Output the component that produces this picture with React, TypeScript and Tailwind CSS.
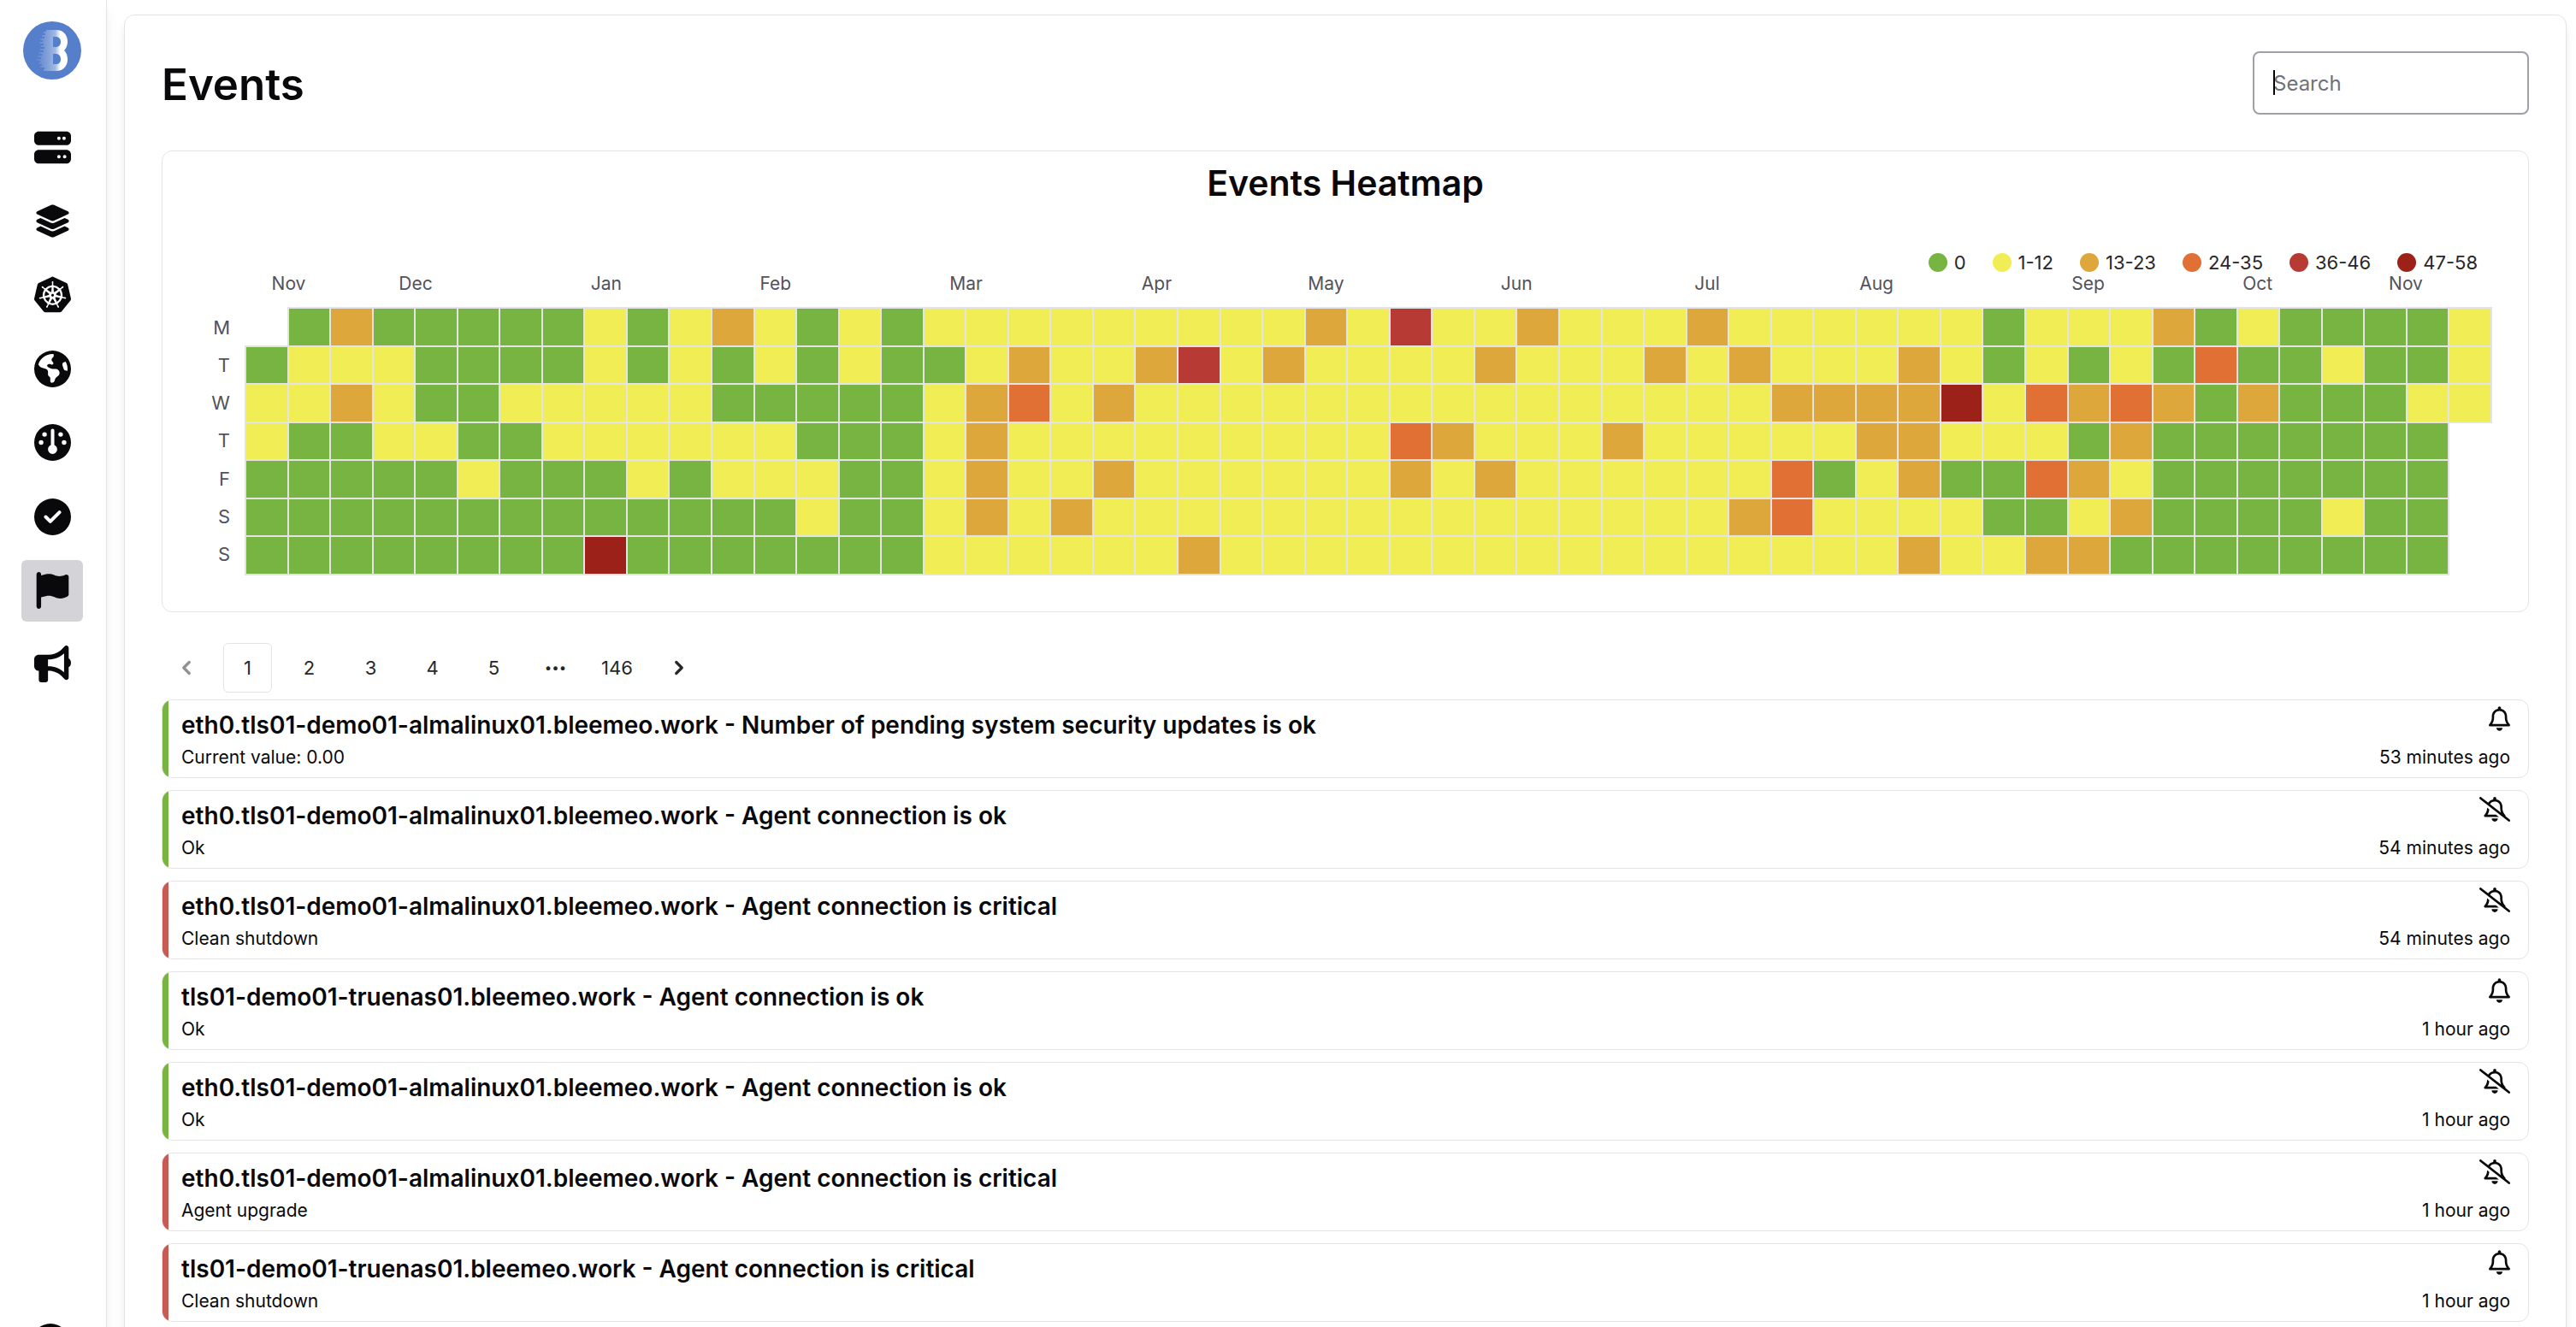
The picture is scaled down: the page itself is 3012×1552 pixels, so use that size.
import { FaServer, FaLayerGroup, FaEarthAmericas, FaGauge, FaCircleCheck, FaFlag, FaBullhorn, FaRegBell, FaRegBellSlash, FaCircleUser } from "react-icons/fa6";
import { SiKubernetes } from "react-icons/si";
import { LuChevronLeft, LuChevronRight } from "react-icons/lu";

const LEVELS: Record<string, string> = {
  g: "bg-[#77b441]",
  y: "bg-[#f1ed55]",
  o: "bg-[#dea73b]",
  r: "bg-[#e07033]",
  c: "bg-[#b83a34]",
  d: "bg-[#9c2219]",
};

// Each day is a run-length list of weekly levels; "-" is a week without data.
const DAYS: [string, string][] = [
  ["M", "-1 g1 o1 g5 y1 g1 y1 o1 y1 g1 y1 g1 y9 o1 y1 c1 y2 o1 y3 o1 y6 g1 y3 o1 g1 y1 g4 y1"],
  ["T", "g1 y3 g4 y1 g1 y1 g1 y1 g1 y1 g2 y1 o1 y2 o1 c1 y1 o1 y4 o1 y3 o1 y1 o1 y3 o1 y1 g1 y1 g1 y1 g1 r1 g2 y1 g2 y1"],
  ["W", "y2 o1 y1 g2 y5 g5 y1 o1 r1 y1 o1 y15 o4 d1 y1 r1 o1 r1 o1 g1 o1 g3 y2"],
  ["T", "y1 g2 y2 g2 y6 g3 y1 o1 y9 r1 o1 y3 o1 y5 o2 y3 g1 o1 g7 -1"],
  ["F", "g5 y1 g3 y1 g1 y3 g2 y1 o1 y2 o1 y6 o1 y1 o1 y6 r1 g1 y1 o1 g2 r1 o1 y1 g7 -1"],
  ["S", "g13 y1 g2 y1 o1 y1 o1 y15 o1 r1 y4 g2 y1 o1 g4 y1 g2 -1"],
  ["S", "g8 d1 g7 y6 o1 y16 o1 y2 o2 g8 -1"],
];

// Month label with its first grid column and the number of columns it is centred over.
const MONTHS: [string, number, number][] = [
  ["Nov", 1, 2], ["Dec", 4, 2], ["Jan", 9, 1], ["Feb", 13, 1], ["Mar", 17, 2], ["Apr", 22, 1], ["May", 26, 1],
  ["Jun", 30, 2], ["Jul", 35, 1], ["Aug", 39, 1], ["Sep", 44, 1], ["Oct", 48, 1], ["Nov", 51, 2],
];

const LEGEND: [string, string][] = [["g", "0"], ["y", "1-12"], ["o", "13-23"], ["r", "24-35"], ["c", "36-46"], ["d", "47-58"]];

const NAV = [
  { label: "Servers", Icon: FaServer },
  { label: "Services", Icon: FaLayerGroup },
  { label: "Kubernetes", Icon: SiKubernetes },
  { label: "Monitors", Icon: FaEarthAmericas },
  { label: "Dashboards", Icon: FaGauge },
  { label: "Status", Icon: FaCircleCheck },
  { label: "Events", Icon: FaFlag, active: true },
  { label: "Announcements", Icon: FaBullhorn },
];

const ALMA = "eth0.tls01-demo01-almalinux01.bleemeo.work";
const TRUENAS = "tls01-demo01-truenas01.bleemeo.work";
const EVENTS = [
  { title: `${ALMA} - Number of pending system security updates is ok`, detail: "Current value: 0.00", time: "53 minutes ago", ok: true, muted: false },
  { title: `${ALMA} - Agent connection is ok`, detail: "Ok", time: "54 minutes ago", ok: true, muted: true },
  { title: `${ALMA} - Agent connection is critical`, detail: "Clean shutdown", time: "54 minutes ago", ok: false, muted: true },
  { title: `${TRUENAS} - Agent connection is ok`, detail: "Ok", time: "1 hour ago", ok: true, muted: false },
  { title: `${ALMA} - Agent connection is ok`, detail: "Ok", time: "1 hour ago", ok: true, muted: true },
  { title: `${ALMA} - Agent connection is critical`, detail: "Agent upgrade", time: "1 hour ago", ok: false, muted: true },
  { title: `${TRUENAS} - Agent connection is critical`, detail: "Clean shutdown", time: "1 hour ago", ok: false, muted: false },
];

function expand(runs: string) {
  return runs.split(" ").flatMap((run) => Array<string>(Number(run.slice(1))).fill(run[0]));
}

// Left ends of the two-pixel speed streaks that trail off the logo's body.
const STREAKS = [27, 24, 26, 22, 25, 20, 23, 19, 24, 21, 25, 20, 24, 18, 22, 17, 21, 16, 20, 18, 22, 20, 25, 24];

function Logo() {
  return (
    <svg viewBox="0 0 68 68" className="size-[68px]" aria-hidden="true">
      <defs>
        <linearGradient id="fade" x1="16" x2="46" y1="0" y2="0" gradientUnits="userSpaceOnUse">
          <stop offset="0" stopColor="#fff" stopOpacity="0.05" />
          <stop offset="0.45" stopColor="#fff" stopOpacity="0.28" />
          <stop offset="0.72" stopColor="#fff" stopOpacity="0.45" />
          <stop offset="0.92" stopColor="#fff" />
        </linearGradient>
      </defs>
      <circle cx="34" cy="34" r="34" fill="#557fcb" />
      <g fill="url(#fade)">
        {STREAKS.map((x, i) => (
          <rect key={i} x={x} y={10 + i * 2} width={30 - x} height="2" />
        ))}
        <path
          fillRule="evenodd"
          d="M30 10H39C47 10 52 16 52 23.500C52 28 50.500 31.500 48 34C50.500 36.500 52 40 52 44.500C52 52 47 58 39 58H30ZM35 18V30H38C42 30 44 27.500 44 24C44 20.500 42 18 38 18ZM35 38V50H38C42 50 44 48 44 44.500C44 40.500 42 38 38 38Z"
        />
      </g>
    </svg>
  );
}

function Sidebar() {
  return (
    <aside className="flex w-[125px] shrink-0 flex-col items-center justify-between border-r border-zinc-200 bg-white pr-0.5 shadow-lg">
      <div className="flex flex-col items-center gap-[43px] pt-[25px]">
        <a href="#home" aria-label="Home"><Logo /></a>
        <nav className="flex h-[677px] flex-col justify-between" aria-label="Main">
          {NAV.map(({ label, Icon, active }) => (
            <a
              key={label}
              href={`#${label}`}
              aria-label={label}
              className={`flex size-[72px] items-center justify-center rounded-md text-zinc-950 ${active ? "bg-zinc-300" : ""}`}
            >
              <Icon className="size-[43px]" />
            </a>
          ))}
        </nav>
      </div>
      <button aria-label="Account" className="-mb-10 pr-1 text-zinc-950"><FaCircleUser className="size-11" /></button>
    </aside>
  );
}

function Heatmap() {
  return (
    <section className="rounded-xl border border-zinc-200 pt-[11px] pr-[44px] pb-11 pl-11">
      <h2 className="text-center text-[41px] leading-[52px] font-semibold">Events Heatmap</h2>
      <ul className="mt-[50px] flex h-[34px] items-center justify-end gap-[31px] pr-[15px] text-[22px] text-zinc-800">
        {LEGEND.map(([level, label]) => (
          <li key={label} className="flex items-center gap-2">
            <span className={`size-[22px] rounded-full ${LEVELS[level]}`} />
            {label}
          </li>
        ))}
      </ul>
      <div className="grid grid-cols-[35px_1fr] gap-x-[19px]">
        <div />
        <div className="grid h-[35px] grid-cols-[repeat(53,minmax(0,1fr))] text-center text-[21px] leading-4 text-zinc-600">
          {MONTHS.map(([name, start, span]) => (
            <span key={start} style={{ gridColumn: `${start} / span ${span}` }}>{name}</span>
          ))}
        </div>
        <div className="grid auto-rows-fr pt-0.5 text-right text-[22px] text-zinc-600">
          {DAYS.map(([day], i) => (
            <span key={i} className="self-center">{day}</span>
          ))}
        </div>
        <div className="mt-0.5 grid h-[310px] auto-rows-fr grid-cols-[repeat(53,minmax(0,1fr))] gap-0.5">
          {DAYS.flatMap(([, runs], row) =>
            expand(runs).map((level, col) => (
              <span
                key={`${row}-${col}`}
                className={level === "-" ? "" : `${LEVELS[level]} shadow-[0_0_0_2px_#e4e4e7]`}
              />
            )),
          )}
        </div>
      </div>
    </section>
  );
}

function Pagination() {
  const item = "flex h-[58px] min-w-[57px] items-center justify-center rounded-md border text-zinc-800";
  return (
    <nav aria-label="Pagination" className="flex gap-[15px]">
      <button aria-label="Previous page" disabled className={`${item} border-transparent opacity-50`}><LuChevronLeft className="size-[26px]" strokeWidth={3} /></button>
      {["1", "2", "3", "4", "5", "•••", "146"].map((page) => (
        <button
          key={page}
          className={`${item} ${page === "1" ? "border-zinc-200" : "border-transparent"} ${page === "•••" ? "text-[15px]" : "text-[22px]"}`}
        >
          {page}
        </button>
      ))}
      <button aria-label="Next page" className={`${item} border-transparent`}><LuChevronRight className="size-[26px]" strokeWidth={3} /></button>
    </nav>
  );
}

export default function App() {
  return (
    <div className="flex h-screen overflow-hidden bg-white font-[Inter,sans-serif] text-zinc-950">
      <Sidebar />
      <main className="min-w-0 flex-1 pt-[17px] pr-[11px] pl-5">
        <div className="rounded-xl border border-zinc-200 bg-white px-[43px] pt-[42px] pb-11 shadow-lg">
          <header className="mb-[42px] flex items-center justify-between">
            <h1 className="pt-1 text-[51px] leading-[64px] font-semibold">Events</h1>
            <div className="relative">
              <input
                type="search"
                aria-label="Search"
                placeholder="Search"
                autoFocus
                className="block h-[74px] w-[323px] rounded-lg border-2 border-zinc-400 px-[22px] text-[24px] caret-transparent outline-none placeholder:text-zinc-500"
              />
              <span className="absolute top-[22px] left-6 h-[29px] w-0.5 bg-black" />
            </div>
          </header>
          <Heatmap />
          <div className="mt-9 mb-2"><Pagination /></div>
          <ul className="flex flex-col gap-[14px]">
            {EVENTS.map((event, i) => (
              <li key={i} className="flex overflow-hidden rounded-xl border border-zinc-200">
                <span className={`w-[7px] shrink-0 ${event.ok ? "bg-[#77b441]" : "bg-[#c85a54]"}`} />
                <div className="flex flex-1 justify-between pt-[7px] pr-[21px] pb-[7px] pl-[15px]">
                  <div>
                    <h3 className="text-[28px] leading-[44px] font-semibold">{event.title}</h3>
                    <p className="text-[21px] leading-[32px]">{event.detail}</p>
                  </div>
                  <div className="flex flex-col items-end">
                    <span className="h-[44px]">
                      {event.muted ? <FaRegBellSlash title="Muted" className="h-[29px] w-9" /> : <FaRegBell title="Notified" className="h-[29px] w-[25px]" />}
                    </span>
                    <time className="text-[21px] leading-[32px]">{event.time}</time>
                  </div>
                </div>
              </li>
            ))}
          </ul>
        </div>
      </main>
    </div>
  );
}
